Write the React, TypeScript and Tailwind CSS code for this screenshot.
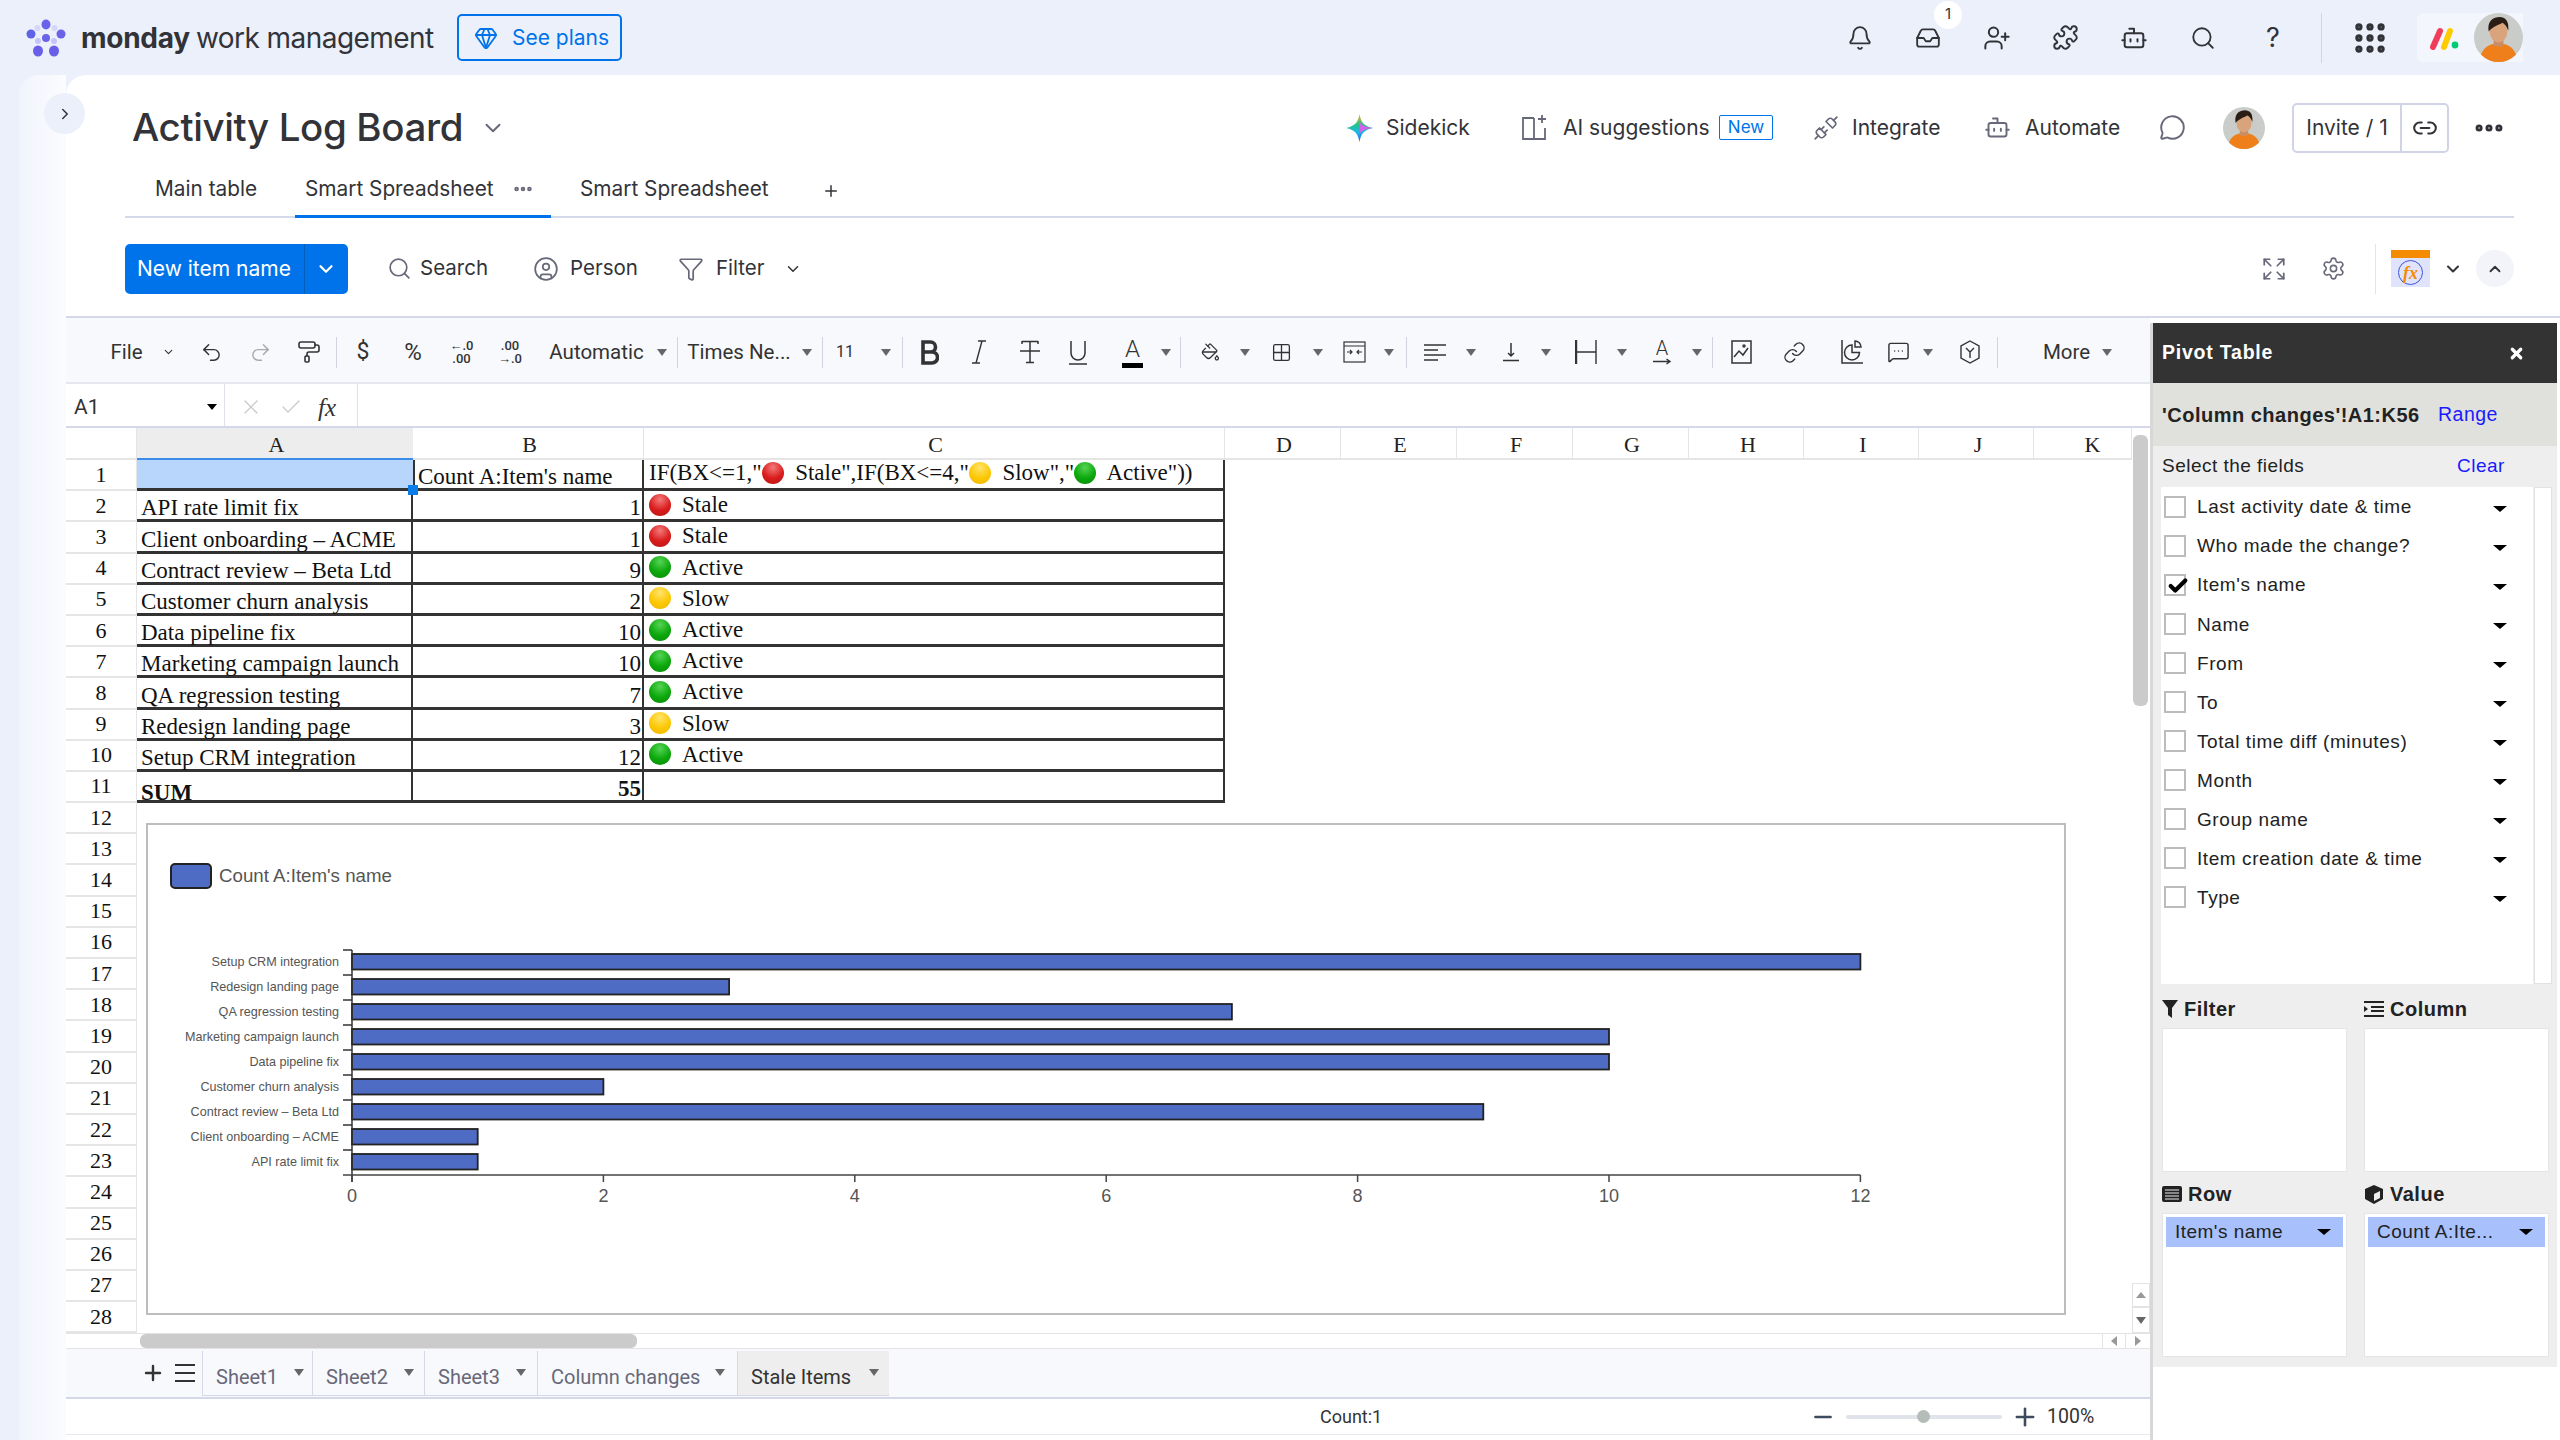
import type { ReactNode } from 'react';
import {
  Bell,
  Bot,
  ChevronDown,
  ChevronRight,
  ChevronUp,
  Ellipsis,
  Expand,
  Funnel,
  Gem,
  Grid2x2,
  Link,
  Link2,
  MessageCircle,
  MessageSquareMore,
  PaintBucket,
  PaintRoller,
  Plus,
  Puzzle,
  Redo2,
  Search,
  Settings,
  Undo2,
  UserPlus,
  X,
  Check,
  Minus,
  CircleUser,
  Inbox,
  Grip,
  Unplug,
} from 'lucide-react';

const FIELDS = [
  'Last activity date & time',
  'Who made the change?',
  "Item's name",
  'Name',
  'From',
  'To',
  'Total time diff (minutes)',
  'Month',
  'Group name',
  'Item creation date & time',
  'Type',
];

const ROWS = [
  { name: 'API rate limit fix', count: 1, status: 'Stale' },
  { name: 'Client onboarding – ACME', count: 1, status: 'Stale' },
  { name: 'Contract review – Beta Ltd', count: 9, status: 'Active' },
  { name: 'Customer churn analysis', count: 2, status: 'Slow' },
  { name: 'Data pipeline fix', count: 10, status: 'Active' },
  { name: 'Marketing campaign launch', count: 10, status: 'Active' },
  { name: 'QA regression testing', count: 7, status: 'Active' },
  { name: 'Redesign landing page', count: 3, status: 'Slow' },
  { name: 'Setup CRM integration', count: 12, status: 'Active' },
];

const BALL: Record<string, string> = {
  Stale: 'bg-[radial-gradient(circle_at_50%_25%,#f47a7a,#d91c1c_55%,#b81414)]',
  Slow: 'bg-[radial-gradient(circle_at_50%_25%,#ffe36b,#fcc804_55%,#f0b400)]',
  Active: 'bg-[radial-gradient(circle_at_50%_25%,#55d455,#0ca80c_55%,#078a07)]',
};

const COLUMNS = [
  { label: 'D', width: 'w-[116px] pl-[3px]' },
  { label: 'E', width: 'w-[116px] pl-[3px]' },
  { label: 'F', width: 'w-[116px] pl-[3px]' },
  { label: 'G', width: 'w-[116px] pl-[3px]' },
  { label: 'H', width: 'w-[115px] pl-[4px]' },
  { label: 'I', width: 'w-[115px] pl-[4px]' },
  { label: 'J', width: 'w-[115px] pl-[4px]' },
  { label: 'K', width: 'w-[98px] pl-[20px]' },
];

const RULE_COUNT = Array.from({ length: 28 }, (_, i) => i + 1);

function Ball({ status }: { status: string }) {
  return <span className={`inline-block h-[22px] w-[22px] shrink-0 rounded-full ${BALL[status]}`} />;
}

function Arrow({ className = '' }: { className?: string }) {
  return (
    <span
      className={`inline-block h-0 w-0 border-x-[5.5px] border-t-[7px] border-x-transparent border-t-[#666] ${className}`}
    />
  );
}

function BlackArrow({ className = '' }: { className?: string }) {
  return (
    <span
      className={`inline-block h-0 w-0 border-x-[7px] border-t-[6px] border-x-transparent border-t-black ${className}`}
    />
  );
}

function Slot({ className, children }: { className: string; children: ReactNode }) {
  return <div className={`flex shrink-0 items-center justify-center ${className}`}>{children}</div>;
}

function Sep({ className }: { className: string }) {
  return <div className={`h-[31px] w-px shrink-0 bg-[#d0d3e0] ${className}`} />;
}

function MondayFlower() {
  return (
    <svg width="40" height="38" viewBox="0 0 40 38" className="shrink-0">
      <ellipse cx="20" cy="5.5" rx="4.5" ry="5" fill="#6a63e8" />
      <ellipse cx="5" cy="15" rx="4.5" ry="4.5" fill="#5f63e6" />
      <ellipse cx="35" cy="15" rx="4.5" ry="4.5" fill="#6a63e8" />
      <circle cx="20" cy="19" r="4" fill="#6a63e8" />
      <ellipse cx="12" cy="32" rx="5" ry="5.5" fill="#6a5ee8" />
      <ellipse cx="28" cy="32" rx="5" ry="5.5" fill="#6a5ee8" />
      <ellipse cx="11.5" cy="9" rx="3" ry="3" fill="#d5d6fa" />
      <ellipse cx="28.5" cy="9" rx="3" ry="3" fill="#d5d6fa" />
      <ellipse cx="28" cy="22" rx="3" ry="3" fill="#c4c5f8" />
      <ellipse cx="12" cy="22" rx="3" ry="3" fill="#c4c5f8" />
    </svg>
  );
}

function Avatar({ size }: { size: number }) {
  return (
    <svg width={size} height={size} viewBox="0 0 50 50" className="shrink-0">
      <clipPath id={`avatar-${size}`}>
        <circle cx="25" cy="25" r="25" />
      </clipPath>
      <g clipPath={`url(#avatar-${size})`}>
        <rect width="50" height="50" fill="#c9ccc8" />
        <path d="M6 50c0-13 8-19 19-19s19 6 19 19z" fill="#ef7f1a" />
        <rect x="20" y="24" width="10" height="10" fill="#c98d66" />
        <ellipse cx="25" cy="19" rx="9" ry="11" fill="#d9a37c" />
        <path d="M15 19c-2-11 5-15 11-15s10 4 9 14c-2-5-4-7-6-8-3 2-9 3-14 9z" fill="#2a1d16" />
      </g>
    </svg>
  );
}

function TopBar() {
  return (
    <header className="flex h-[75px] shrink-0 items-center bg-[#ecf0fb] font-['Inter',sans-serif]">
      <div className="ml-[26px]">
        <MondayFlower />
      </div>
      <span className="ml-[15px] w-[115px] text-[28px] font-bold leading-none tracking-[-0.01em] text-[#323338]">
        monday
      </span>
      <span className="w-[261px] whitespace-nowrap text-[28px] leading-none tracking-[-0.02em] text-[#323338]">
        work management
      </span>
      <button className="flex h-[47px] w-[165px] items-center rounded-[5px] border-2 border-[#0073ea] pl-[15px] text-[#0073ea]">
        <Gem size={24} strokeWidth={1.8} />
        <span className="ml-[14px] text-[21px]">See plans</span>
      </button>
      <div className="ml-auto flex items-center text-[#323338]">
        <Bell size={26} strokeWidth={1.7} />
        <div className="relative ml-[42px]">
          <Inbox size={26} strokeWidth={1.7} />
          <span className="absolute left-[19px] top-[-24px] flex h-[28px] w-[28px] items-center justify-center rounded-full bg-white text-[15px]">
            1
          </span>
        </div>
        <UserPlus size={28} strokeWidth={1.7} className="ml-[42px]" />
        <Puzzle size={27} strokeWidth={1.7} className="ml-[41px]" />
        <Bot size={28} strokeWidth={1.7} className="ml-[41px]" />
        <Search size={26} strokeWidth={1.7} className="ml-[42px]" />
        <span className="ml-[50px] w-[16px] text-[27px] leading-none">?</span>
        <div className="ml-[39px] h-[50px] w-px bg-[#d0d4e4]" />
        <Grip size={38} strokeWidth={2.6} className="ml-[29px]" />
        <div className="ml-[28px] flex h-[49px] w-[106px] items-center rounded-l-[6px] bg-[#f4f6fd] pl-[12px]">
          <svg width="30" height="26" viewBox="0 0 30 26" className="shrink-0">
            <line x1="4" y1="22" x2="11" y2="6" stroke="#f03d5c" strokeWidth="6" strokeLinecap="round" />
            <line x1="15" y1="22" x2="21" y2="6" stroke="#ffcb00" strokeWidth="6" strokeLinecap="round" />
            <circle cx="26" cy="20" r="3.4" fill="#00ca72" />
          </svg>
          <div className="ml-[15px]">
            <Avatar size={49} />
          </div>
        </div>
        <div className="w-[37px]" />
      </div>
    </header>
  );
}

function BoardHeader() {
  return (
    <div className="h-[243px] shrink-0 border-b-[2px] border-[#d5d8e8] font-['Inter',sans-serif] text-[#323338]">
      <div className="flex h-[97px] items-center pl-[66px] pt-[8px]">
        <h1 className="text-[38.5px] font-medium leading-none tracking-[-0.01em]">Activity Log Board</h1>
        <ChevronDown size={26} strokeWidth={1.8} className="ml-[17px] text-[#676879]" />
        <div className="ml-auto flex items-center text-[21px] text-[#323338]">
          <svg width="27" height="28" viewBox="0 0 27 28" className="shrink-0">
            <defs>
              <linearGradient id="spark" x1="0" y1="0" x2="0" y2="1">
                <stop offset="0" stopColor="#f5b32a" />
                <stop offset="0.4" stopColor="#21c48d" />
                <stop offset="0.65" stopColor="#1fb6e8" />
                <stop offset="1" stopColor="#1f5fff" />
              </linearGradient>
            </defs>
            <path d="M13.500 0c1.500 8 4 12 13.500 14-9.500 2-12 6-13.500 14-1.500-8-4-12-13.500-14 9.500-2 12-6 13.500-14z" fill="url(#spark)" />
            <path d="M13.500 7c1 4 5 6 13.500 7-8.500 1-12.500 3-13.500 7z" fill="#d65fe8" />
          </svg>
          <span className="ml-[13px] w-[135px]">Sidekick</span>
          <svg width="27" height="27" viewBox="0 0 27 27" fill="none" stroke="#676879" strokeWidth="1.8" className="shrink-0">
            <path d="M13 4H2v21h22V14M13 4v21" />
            <path d="M21 1v8M17 5h8" />
          </svg>
          <span className="ml-[15px] w-[156px]">AI suggestions</span>
          <span className="flex h-[25px] w-[54px] items-center justify-center rounded-[2px] border-[1.5px] border-[#0073ea] text-[17px] text-[#0073ea]">
            New
          </span>
          <Unplug size={26} strokeWidth={1.6} className="ml-[40px] text-[#676879]" />
          <span className="ml-[13px] w-[132px]">Integrate</span>
          <Bot size={27} strokeWidth={1.7} className="text-[#676879]" />
          <span className="ml-[14px] w-[134px]">Automate</span>
          <MessageCircle size={27} strokeWidth={1.7} className="text-[#676879]" />
          <div className="ml-[37px]">
            <Avatar size={42} />
          </div>
          <div className="ml-[27px] flex h-[50px] w-[157px] items-center rounded-[5px] border-2 border-[#d0d4e4]">
            <span className="w-[108px] border-r-2 border-[#d0d4e4] text-center leading-[46px]">Invite / 1</span>
            <Link2 size={26} strokeWidth={1.9} className="ml-[10px]" />
          </div>
          <Ellipsis size={34} strokeWidth={3} className="ml-[23px]" />
          <div className="w-[54px]" />
        </div>
      </div>
      <div className="ml-[59px] mr-[46px] flex h-[46px] items-end border-b-[2px] border-[#d5d8e8] text-[20.8px]">
        <div className="flex h-[46px] w-[170px] items-center justify-start pb-[8px] pl-[30px]">Main table</div>
        <div className="-mb-[2px] flex h-[48px] w-[256px] items-center border-b-[3px] border-[#0073ea] pb-[8px] pl-[10px]">
          Smart Spreadsheet
          <Ellipsis size={22} strokeWidth={3} className="ml-[18px] text-[#676879]" />
        </div>
        <div className="flex h-[46px] items-center pb-[8px] pl-[29px]">Smart Spreadsheet</div>
        <Plus size={18} strokeWidth={2} className="mb-[16px] ml-[53px]" />
      </div>
      <div className="flex h-[98px] items-center pl-[59px] pt-[3px]">
        <div className="flex h-[50px] w-[223px] items-center rounded-[5px] bg-[#0073ea] text-[21px] text-white">
          <span className="w-[180px] border-r border-[#0060b9] pl-[12px] leading-[50px]">New item name</span>
          <ChevronDown size={22} strokeWidth={2.4} className="ml-[10px]" />
        </div>
        <Search size={25} strokeWidth={1.6} className="ml-[39px] text-[#676879]" />
        <span className="ml-[8px] w-[67px] text-[20.500px]">Search</span>
        <CircleUser size={26} strokeWidth={1.6} className="ml-[46px] text-[#676879]" />
        <span className="ml-[11px] w-[67px] text-[20.500px]">Person</span>
        <Funnel size={26} strokeWidth={1.6} className="ml-[41px] text-[#676879]" />
        <span className="ml-[12px] w-[48px] text-[20.500px]">Filter</span>
        <ChevronDown size={18} strokeWidth={2} className="ml-[20px]" />
        <div className="ml-auto flex items-center">
          <Expand size={26} strokeWidth={1.6} className="text-[#676879]" />
          <Settings size={25} strokeWidth={1.5} className="ml-[34px] text-[#676879]" />
          <div className="ml-[29px] h-[50px] w-px bg-[#e1e3ee]" />
          <div className="ml-[15px] h-[37px] w-[39px] bg-[#dfe3fb]">
            <div className="h-[8px] bg-[#f58b00]" />
            <div className="mx-auto mt-[2px] flex h-[25px] w-[25px] items-center justify-center rounded-full border border-[#3f55e0] font-['Liberation_Serif',serif] text-[18px] font-bold italic leading-none text-[#f58b00]">
              fx
            </div>
          </div>
          <ChevronDown size={20} strokeWidth={2.4} className="ml-[13px]" />
          <div className="ml-[13px] flex h-[37px] w-[38px] items-center justify-center rounded-full bg-[#f3f4f9]">
            <ChevronUp size={18} strokeWidth={2.4} />
          </div>
          <div className="w-[46px]" />
        </div>
      </div>
    </div>
  );
}

function Toolbar() {
  return (
    <div className="flex h-[66px] shrink-0 items-center border-b-2 border-[#e6e8ef] bg-[#f8f9fc] pt-[4px] font-['Roboto',sans-serif] text-[20.500px] text-[#333]">
      <Slot className="ml-[44px] w-[33px]">File</Slot>
      <Slot className="ml-[19px] w-[13px]">
        <ChevronDown size={16} strokeWidth={2} />
      </Slot>
      <Slot className="ml-[24px] w-[24px]">
        <Undo2 size={23} strokeWidth={1.5} />
      </Slot>
      <Slot className="ml-[25px] w-[24px]">
        <Redo2 size={23} strokeWidth={1.5} className="text-[#aaa]" />
      </Slot>
      <Slot className="ml-[25px] w-[24px]">
        <PaintRoller size={24} strokeWidth={1.6} />
      </Slot>
      <Sep className="ml-[15px]" />
      <Slot className="ml-[18px] w-[16px] text-[23px]">$</Slot>
      <Slot className="ml-[30px] w-[24px] text-[24px]">%</Slot>
      <Slot className="ml-[27px] w-[19px] flex-col text-[13px] font-medium leading-[13px]">
        <span>←.0</span>
        <span>.00</span>
      </Slot>
      <Slot className="ml-[29px] w-[20px] flex-col text-[13px] font-medium leading-[13px]">
        <span>.00</span>
        <span>→.0</span>
      </Slot>
      <Slot className="ml-[26px] w-[101px]">Automatic</Slot>
      <Slot className="ml-[9px] w-[11px]">
        <Arrow />
      </Slot>
      <Sep className="ml-[10px]" />
      <Slot className="ml-[9px] w-[104px] whitespace-nowrap">Times Ne...</Slot>
      <Slot className="ml-[10px] w-[11px]">
        <Arrow />
      </Slot>
      <Sep className="ml-[10px]" />
      <Slot className="ml-[14px] w-[16px] text-[16px]">11</Slot>
      <Slot className="ml-[27px] w-[12px]">
        <Arrow />
      </Slot>
      <Sep className="ml-[10px]" />
      <Slot className="ml-[18px] w-[18px]">
        <svg width="18" height="25" viewBox="0 0 18 25" fill="none" stroke="#333" strokeWidth="3.6" className="shrink-0">
          <path d="M2 2h7.500a5 5 0 0 1 0 10H2zM2 12h9a5.500 5.500 0 0 1 0 11H2z" />
        </svg>
      </Slot>
      <Slot className="ml-[34px] w-[12px]">
        <svg width="14" height="24" viewBox="0 0 14 24" fill="none" stroke="#333" strokeWidth="1.4" className="shrink-0">
          <path d="M6 1h8M10 1L4 23M0 23h8" />
        </svg>
      </Slot>
      <Slot className="ml-[35px] w-[19px]">
        <svg width="20" height="24" viewBox="0 0 20 24" fill="none" stroke="#333" strokeWidth="1.5" className="shrink-0">
          <path d="M2 1.500h16M10 1.500v21M6 22.500h8M0 11h20M2 1v3M18 1v3" />
        </svg>
      </Slot>
      <Slot className="ml-[29px] w-[19px]">
        <svg width="20" height="25" viewBox="0 0 20 25" fill="none" stroke="#333" strokeWidth="1.5" className="shrink-0">
          <path d="M3 1v12a7 7 0 0 0 14 0V1M1 24h18" />
        </svg>
      </Slot>
      <Slot className="ml-[35px] w-[21px] flex-col">
        <span className="text-[24px] font-light leading-[24px]">A</span>
        <span className="mt-[2px] h-[5px] w-[21px] bg-black" />
      </Slot>
      <Slot className="ml-[17px] w-[11px]">
        <Arrow />
      </Slot>
      <Sep className="ml-[9px]" />
      <Slot className="ml-[20px] w-[19px]">
        <PaintBucket size={22} strokeWidth={1.6} />
      </Slot>
      <Slot className="ml-[19px] w-[12px]">
        <Arrow />
      </Slot>
      <Slot className="ml-[20px] w-[21px]">
        <Grid2x2 size={25} strokeWidth={1.5} />
      </Slot>
      <Slot className="ml-[20px] w-[12px]">
        <Arrow />
      </Slot>
      <Slot className="ml-[19px] w-[23px]">
        <svg width="23" height="22" viewBox="0 0 23 22" fill="none" stroke="#333" strokeWidth="1.2">
          <rect x="1" y="1" width="21" height="20" />
          <path d="M1 5h21M4 11h5M19 11h-5M7 9l2 2-2 2M16 9l-2 2 2 2" />
        </svg>
      </Slot>
      <Slot className="ml-[17px] w-[12px]">
        <Arrow />
      </Slot>
      <Sep className="ml-[11px]" />
      <Slot className="ml-[17px] w-[22px]">
        <svg width="22" height="19" viewBox="0 0 22 19" fill="none" stroke="#333" strokeWidth="1.5">
          <path d="M0 2h22M0 7h14M0 12h22M0 17h14" />
        </svg>
      </Slot>
      <Slot className="ml-[19px] w-[11px]">
        <Arrow />
      </Slot>
      <Slot className="ml-[27px] w-[16px]">
        <svg width="16" height="20" viewBox="0 0 16 20" fill="none" stroke="#333" strokeWidth="1.5">
          <path d="M8 1v13M5 11l3 3 3-3M0 18.500h16" />
        </svg>
      </Slot>
      <Slot className="ml-[21px] w-[12px]">
        <Arrow />
      </Slot>
      <Slot className="ml-[23px] w-[22px]">
        <svg width="22" height="24" viewBox="0 0 22 24" fill="none" stroke="#333">
          <path d="M1 0v24" strokeWidth="2.4" />
          <path d="M1 12h20M21 0v24" strokeWidth="1.4" />
        </svg>
      </Slot>
      <Slot className="ml-[19px] w-[11px]">
        <Arrow />
      </Slot>
      <Slot className="ml-[25px] w-[20px] flex-col">
        <span className="text-[20px] font-light leading-[19px]">A</span>
        <svg width="20" height="7" viewBox="0 0 20 7" fill="none" stroke="#333" strokeWidth="1.4" className="shrink-0">
          <path d="M1 3.500h17M14.500 1l3.500 2.500-3.500 2.500" />
        </svg>
      </Slot>
      <Slot className="ml-[19px] w-[12px]">
        <Arrow />
      </Slot>
      <Sep className="ml-[9px]" />
      <Slot className="ml-[18px] w-[21px]">
        <svg width="21" height="24" viewBox="0 0 21 24" fill="none" stroke="#333" strokeWidth="1.5" className="shrink-0">
          <rect x="1" y="1" width="19" height="22" />
          <path d="M3 17l5-6 4 4 5-7" />
          <circle cx="13" cy="6" r="1" />
        </svg>
      </Slot>
      <Slot className="ml-[30px] w-[24px]">
        <Link size={23} strokeWidth={1.5} />
      </Slot>
      <Slot className="ml-[35px] w-[21px]">
        <svg width="22" height="24" viewBox="0 0 22 24" fill="none" stroke="#333" strokeWidth="1.5" className="shrink-0">
          <path d="M1 0v23h21" />
          <path d="M11 5a7.500 7.500 0 1 0 7.500 7.500H11z" />
          <path d="M14 1a6 6 0 0 1 6 6h-6z" />
        </svg>
      </Slot>
      <Slot className="ml-[25px] w-[23px]">
        <MessageSquareMore size={24} strokeWidth={1.5} />
      </Slot>
      <Slot className="ml-[12px] w-[12px]">
        <Arrow />
      </Slot>
      <Slot className="ml-[26px] w-[20px]">
        <svg width="20" height="24" viewBox="0 0 20 24" fill="none" stroke="#333" strokeWidth="1.4">
          <path d="M10 1l9 5v12l-9 5-9-5V6zM6 8l4 4 4-4M10 12v6" />
        </svg>
      </Slot>
      <Sep className="ml-[17px]" />
      <Slot className="ml-[44px] w-[49px]">More</Slot>
      <Slot className="ml-[10px] w-[12px]">
        <Arrow />
      </Slot>
    </div>
  );
}

function FormulaBar() {
  return (
    <div className="flex h-[44px] shrink-0 items-center border-b-2 border-[#d5d8e8] font-['Roboto',sans-serif] text-[#333]">
      <span className="ml-[8px] w-[133px] pt-[6px] text-[21px]">A1</span>
      <span className="mt-[4px] inline-block h-0 w-0 border-x-[5px] border-t-[6px] border-x-transparent border-t-black" />
      <div className="ml-[7px] flex h-full w-[134px] items-center border-x border-[#dfe1ea] pt-[4px]">
        <X size={24} strokeWidth={1.4} className="ml-[14px] text-[#ccc]" />
        <Check size={24} strokeWidth={1.4} className="ml-[16px] text-[#ccc]" />
        <span className="ml-[15px] font-['Liberation_Serif',serif] text-[25px] italic leading-none">fx</span>
      </div>
    </div>
  );
}

function ColumnHeader() {
  return (
    <div className="flex h-[32px] shrink-0 font-['Liberation_Serif',serif] text-[22px] text-[#222]">
      <div className="w-[71px] border-b-2 border-r border-[#e5e5e5]" />
      <div className="flex w-[276px] items-center justify-center border-b-2 border-[#3c8ce7] bg-[#ededed] pl-[3px] pt-[2px]">
        A
      </div>
      <div className="flex w-[231px] items-center justify-center border-b-2 border-r border-[#e5e5e5] pl-[3px] pt-[2px]">
        B
      </div>
      <div className="flex w-[581px] items-center justify-center border-b-2 border-r border-[#e5e5e5] pl-[3px] pt-[2px]">
        C
      </div>
      {COLUMNS.map((col) => (
        <div key={col.label} className={`flex items-center justify-center border-b-2 border-r border-[#e5e5e5] pt-[2px] ${col.width}`}>
          {col.label}
        </div>
      ))}
    </div>
  );
}

function SheetGrid() {
  const cellEdge = 'border-b-[3px] border-r-2 border-[#333]';
  return (
    <div className="min-h-0 flex-1 font-['Liberation_Serif',serif] text-[23px] leading-none text-[#111]">
      {RULE_COUNT.map((n) => {
        const row = ROWS[n - 2];
        return (
          <div key={n} className="flex h-[31.2px]">
            <div className="flex w-[71px] items-center justify-center border-b-2 border-r border-[#e5e5e5] text-[22px]">{n}</div>
            {n === 1 ? (
              <>
                <div className="relative w-[276px] border-b-[3px] border-[#333] bg-[#b8d6fb]">
                  <span className="absolute bottom-[-7px] right-[-5px] h-[10px] w-[10px] bg-[#0b7de8]" />
                </div>
                <div className={`flex w-[231px] items-end whitespace-nowrap pl-[3px] ${cellEdge} border-l-2`}>Count A:Item's name</div>
                <div className={`flex w-[581px] items-center whitespace-pre pb-[3px] pl-[5px] ${cellEdge}`}>
                  IF(BX&lt;=1,"
                  <Ball status="Stale" />
                  {'  Stale",IF(BX<=4,"'}
                  <Ball status="Slow" />
                  {'  Slow","'}
                  <Ball status="Active" />
                  {'  Active"))'}
                </div>
              </>
            ) : null}
            {row ? (
              <>
                <div className={`flex w-[276px] items-end whitespace-nowrap pl-[4px] ${cellEdge}`}>{row.name}</div>
                <div className={`flex w-[231px] items-end justify-end pr-[1px] ${cellEdge}`}>{row.count}</div>
                <div className={`flex w-[581px] items-center pb-[1px] pl-[5px] ${cellEdge}`}>
                  <Ball status={row.status} />
                  <span className="ml-[11px]">{row.status}</span>
                </div>
              </>
            ) : null}
            {n === 11 ? (
              <>
                <div className={`flex w-[276px] items-start pl-[4px] pt-[9px] font-bold ${cellEdge}`}>SUM</div>
                <div className={`flex w-[231px] items-end justify-end pr-[1px] font-bold ${cellEdge}`}>55</div>
                <div className={`w-[581px] ${cellEdge}`} />
              </>
            ) : null}
          </div>
        );
      })}
    </div>
  );
}

const BAR_NAMES = [...ROWS].reverse();

function BarChart() {
  const axisX = 204;
  const unit = 125.7;
  return (
    <div className="absolute left-[80px] top-[395px] h-[492px] w-[1920px] border-2 border-[#bdbdbd] bg-white font-['Liberation_Sans',sans-serif]">
      <div className="ml-[22px] mt-[37px] flex items-center text-[18.700px] text-[#555]">
        <span className="h-[26px] w-[42px] rounded-[5px] border-2 border-[#222] bg-[#4f6cc4]" />
        <span className="ml-[7px]">Count A:Item's name</span>
      </div>
      <svg width="1916" height="488" viewBox="0 0 1916 488" className="absolute left-0 top-0">
        {BAR_NAMES.map((row, i) => (
          <g key={row.name}>
            <line x1={195} x2={axisX} y1={125 + i * 25} y2={125 + i * 25} stroke="#333" strokeWidth="1.5" />
            <rect
              x={axisX}
              y={129 + i * 25}
              width={row.count * unit}
              height={15.500}
              fill="#4f6cc4"
              stroke="#222"
              strokeWidth="1.8"
            />
            <text x={191} y={141 + i * 25} textAnchor="end" fontSize="12.600" fill="#555">
              {row.name}
            </text>
          </g>
        ))}
        <line x1={axisX} x2={axisX} y1={125} y2={357} stroke="#333" strokeWidth="1.5" />
        <line x1={195} x2={axisX + 12 * unit} y1={350} y2={350} stroke="#444" strokeWidth="1.5" />
        {[0, 2, 4, 6, 8, 10, 12].map((v) => (
          <g key={v}>
            <line x1={axisX + v * unit} x2={axisX + v * unit} y1={350} y2={357} stroke="#444" strokeWidth="1.5" />
            <text x={axisX + v * unit} y={377} textAnchor="middle" fontSize="18" fill="#555">
              {v}
            </text>
          </g>
        ))}
      </svg>
    </div>
  );
}

function SheetTabs() {
  const tabs = [
    { label: 'Sheet1', text: 'w-[96px]', width: 'w-[110px]' },
    { label: 'Sheet2', text: 'w-[96px]', width: 'w-[112px]' },
    { label: 'Sheet3', text: 'w-[96px]', width: 'w-[113px]' },
    { label: 'Column changes', text: 'w-[182px]', width: 'w-[200px]' },
  ];
  return (
    <div className="flex h-[50px] shrink-0 items-center border-b-[2px] border-[#d5d8e8] bg-[#f8f9fc] font-['Roboto',sans-serif] text-[20px] text-[#676879]">
      <Plus size={24} strokeWidth={2.4} className="ml-[75px] text-[#333]" />
      <div className="ml-[10px] flex h-[18px] w-[20px] flex-col justify-between">
        <span className="h-[2px] bg-[#333]" />
        <span className="h-[2px] bg-[#333]" />
        <span className="h-[2px] bg-[#333]" />
      </div>
      <div className="ml-[7px] mt-[1px] flex h-[45px] border-b border-l border-[#d5d8e8]">
        {tabs.map((tab) => (
          <div key={tab.label} className={`flex items-center border-r border-[#d5d8e8] pl-[13px] ${tab.width}`}>
            <span className={`pt-[8px] ${tab.text}`}>{tab.label}</span>
            <Arrow className="-ml-[18px] -mt-[1px]" />
          </div>
        ))}
        <div className="flex w-[151px] items-center bg-[#eeeeee] pl-[13px] text-[#333]">
          <span className="w-[118px] pt-[8px]">Stale Items</span>
          <Arrow className="-mt-[1px]" />
        </div>
      </div>
    </div>
  );
}

function StatusBar() {
  return (
    <div className="flex h-[36px] shrink-0 items-center border-b border-[#e6e8ef] font-['Roboto',sans-serif] text-[18px] text-[#333]">
      <span className="ml-[1254px] w-[490px]">Count:1</span>
      <Minus size={26} strokeWidth={2.4} className="text-[#3e4a5e]" />
      <div className="relative ml-[10px] h-[4px] w-[156px] rounded bg-[#e1e3ea]">
        <span className="absolute left-[71px] top-[-5px] h-[13px] w-[13px] rounded-full bg-[#b4bdb8]" />
      </div>
      <Plus size={28} strokeWidth={2.2} className="ml-[9px] text-[#3e4a5e]" />
      <span className="ml-[8px] text-[19.500px]">100%</span>
    </div>
  );
}

function Spreadsheet() {
  return (
    <div className="flex w-[2084px] shrink-0 flex-col pb-[5px]">
      <Toolbar />
      <FormulaBar />
      <div className="flex min-h-0 flex-1">
        <div className="relative flex w-[2066px] flex-col">
          <ColumnHeader />
          <SheetGrid />
          <BarChart />
        </div>
        <div className="flex w-[18px] flex-col">
          <div className="relative flex-1">
            <div className="ml-[1px] mt-[7px] h-[271px] w-[15px] rounded-[6px] bg-[#cbcbcb]" />
          </div>
          <div className="flex h-[24px] items-center justify-center border border-[#e3e3e3]">
            <span className="h-0 w-0 border-x-[5px] border-b-[6px] border-x-transparent border-b-[#999]" />
          </div>
          <div className="flex h-[26px] items-center justify-center border border-[#e3e3e3]">
            <Arrow />
          </div>
        </div>
      </div>
      <div className="flex h-[16px] shrink-0 border-y border-[#e3e3e3]">
        <div className="ml-[74px] h-full w-[497px] rounded-[6px] bg-[#cbcbcb]" />
        <div className="ml-auto flex items-center">
          <div className="flex h-full w-[24px] items-center justify-center border-x border-[#e3e3e3]">
            <span className="h-0 w-0 border-y-[5px] border-r-[6px] border-y-transparent border-r-[#999]" />
          </div>
          <div className="flex h-full w-[24px] items-center justify-center">
            <span className="h-0 w-0 border-y-[5px] border-l-[6px] border-y-transparent border-l-[#999]" />
          </div>
        </div>
      </div>
      <SheetTabs />
      <StatusBar />
    </div>
  );
}

function DropZone({ children }: { children?: ReactNode }) {
  return <div className="mt-[3px] h-[144px] w-[185px] border border-[#e5e5e5] bg-white px-[3px] pt-[3px]">{children}</div>;
}

function Chip({ label }: { label: string }) {
  return (
    <div className="flex h-[30px] items-center justify-between bg-[#a8c0fc] pl-[9px] pr-[12px] text-[19px] tracking-[0.025em] text-[#222]">
      <span>{label}</span>
      <BlackArrow />
    </div>
  );
}

function AreaLabel({ icon, label }: { icon: ReactNode; label: string }) {
  return (
    <div className="flex h-[32px] items-center text-[20px] font-bold tracking-[0.025em]">
      {icon}
      <span className="ml-[6px]">{label}</span>
    </div>
  );
}

function PivotPanel() {
  return (
    <aside className="mr-[3px] mt-[5px] flex w-[407px] shrink-0 flex-col border-l-[3px] border-[#d8d8d8] font-['Liberation_Sans',sans-serif] text-[#222]">
      <div className="flex h-[60px] shrink-0 items-center justify-between bg-[#333333] pl-[9px] pr-[32px] text-white">
        <span className="text-[19.500px] font-bold tracking-[0.04em]">Pivot Table</span>
        <X size={17} strokeWidth={4.5} />
      </div>
      <div className="flex h-[63px] shrink-0 items-center bg-[#e0e0dc] pl-[9px] text-[20px]">
        <span className="w-[276px] whitespace-nowrap font-bold tracking-[0.025em]">'Column changes'!A1:K56</span>
        <span className="text-[19.500px] tracking-[0.025em] text-[#1a1aff]">Range</span>
      </div>
      <div className="h-[921px] shrink-0 bg-[#eeeeee]">
        <div className="flex h-[41px] items-center pl-[9px] text-[19px] tracking-[0.025em]">
          <span className="w-[295px]">Select the fields</span>
          <span className="text-[#1a1aff]">Clear</span>
        </div>
        <div className="ml-[8px] flex h-[497px]">
          <div className="w-[372px] bg-white">
            {FIELDS.map((field) => (
              <div key={field} className="flex h-[39.1px] items-center">
                <div className="relative ml-[3px] h-[22px] w-[22px] border-2 border-[#bcbcbc] bg-white">
                  {field === "Item's name" ? (
                    <Check size={22} strokeWidth={4.5} className="absolute left-[1px] top-[-1px] text-black" />
                  ) : null}
                </div>
                <span className="ml-[11px] w-[296px] whitespace-nowrap pt-[2px] text-[19px] tracking-[0.03em]">{field}</span>
                <BlackArrow className="mt-[4px]" />
              </div>
            ))}
          </div>
          <div className="ml-[1px] w-[18px] border border-[#e2e2e2] bg-white" />
        </div>
        <div className="ml-[9px] mt-[9px] grid w-[387px] grid-cols-[185px_185px] gap-x-[17px] gap-y-[6px]">
          <div>
            <AreaLabel
              label="Filter"
              icon={
                <svg width="16" height="18" viewBox="0 0 16 18" fill="#222" className="shrink-0">
                  <path d="M0 0h16L10 8v10L6 15V8z" />
                </svg>
              }
            />
            <DropZone />
          </div>
          <div>
            <AreaLabel
              label="Column"
              icon={
                <svg width="20" height="16" viewBox="0 0 20 16" fill="#222" className="shrink-0">
                  <path d="M0 0h20v2H0zM7 5h13v2H7zM7 9h13v2H7zM0 14h20v2H0zM0 5l4 3-4 3z" />
                </svg>
              }
            />
            <DropZone />
          </div>
          <div>
            <AreaLabel
              label="Row"
              icon={
                <svg width="20" height="16" viewBox="0 0 20 16" className="shrink-0">
                  <rect width="20" height="16" rx="2" fill="#222" />
                  <path d="M3 4h14M3 7h14M3 10h14M3 13h14" stroke="#eee" strokeWidth="1.2" />
                </svg>
              }
            />
            <DropZone>
              <Chip label="Item's name" />
            </DropZone>
          </div>
          <div>
            <AreaLabel
              label="Value"
              icon={
                <svg width="20" height="19" viewBox="0 0 20 19" className="shrink-0">
                  <path d="M10 0l9 4v10l-9 5-9-5V4z" fill="#222" />
                  <path d="M10 9l6-3v7l-6 3z" fill="#eee" />
                </svg>
              }
            />
            <DropZone>
              <Chip label="Count A:Ite..." />
            </DropZone>
          </div>
        </div>
      </div>
      <div className="flex-1 bg-white" />
    </aside>
  );
}

export default function App() {
  return (
    <div className="relative flex h-[1440px] w-[2560px] flex-col overflow-hidden bg-[#ecf0fb]">
      <TopBar />
      <div className="flex min-h-0 flex-1">
        <div className="ml-[19px] w-[47px] shrink-0 rounded-tl-[20px] bg-gradient-to-r from-[#f1f4fc] to-[#fbfcfe]" />
        <main className="flex min-w-0 flex-1 flex-col rounded-tl-[20px] bg-white">
          <BoardHeader />
          <div className="flex min-h-0 flex-1">
            <Spreadsheet />
            <PivotPanel />
          </div>
        </main>
      </div>
      <div className="absolute left-[44px] top-[93px] flex h-[41px] w-[41px] items-center justify-center rounded-full bg-[#ecf0fb]">
        <ChevronRight size={18} strokeWidth={2} className="text-[#323338]" />
      </div>
    </div>
  );
}
